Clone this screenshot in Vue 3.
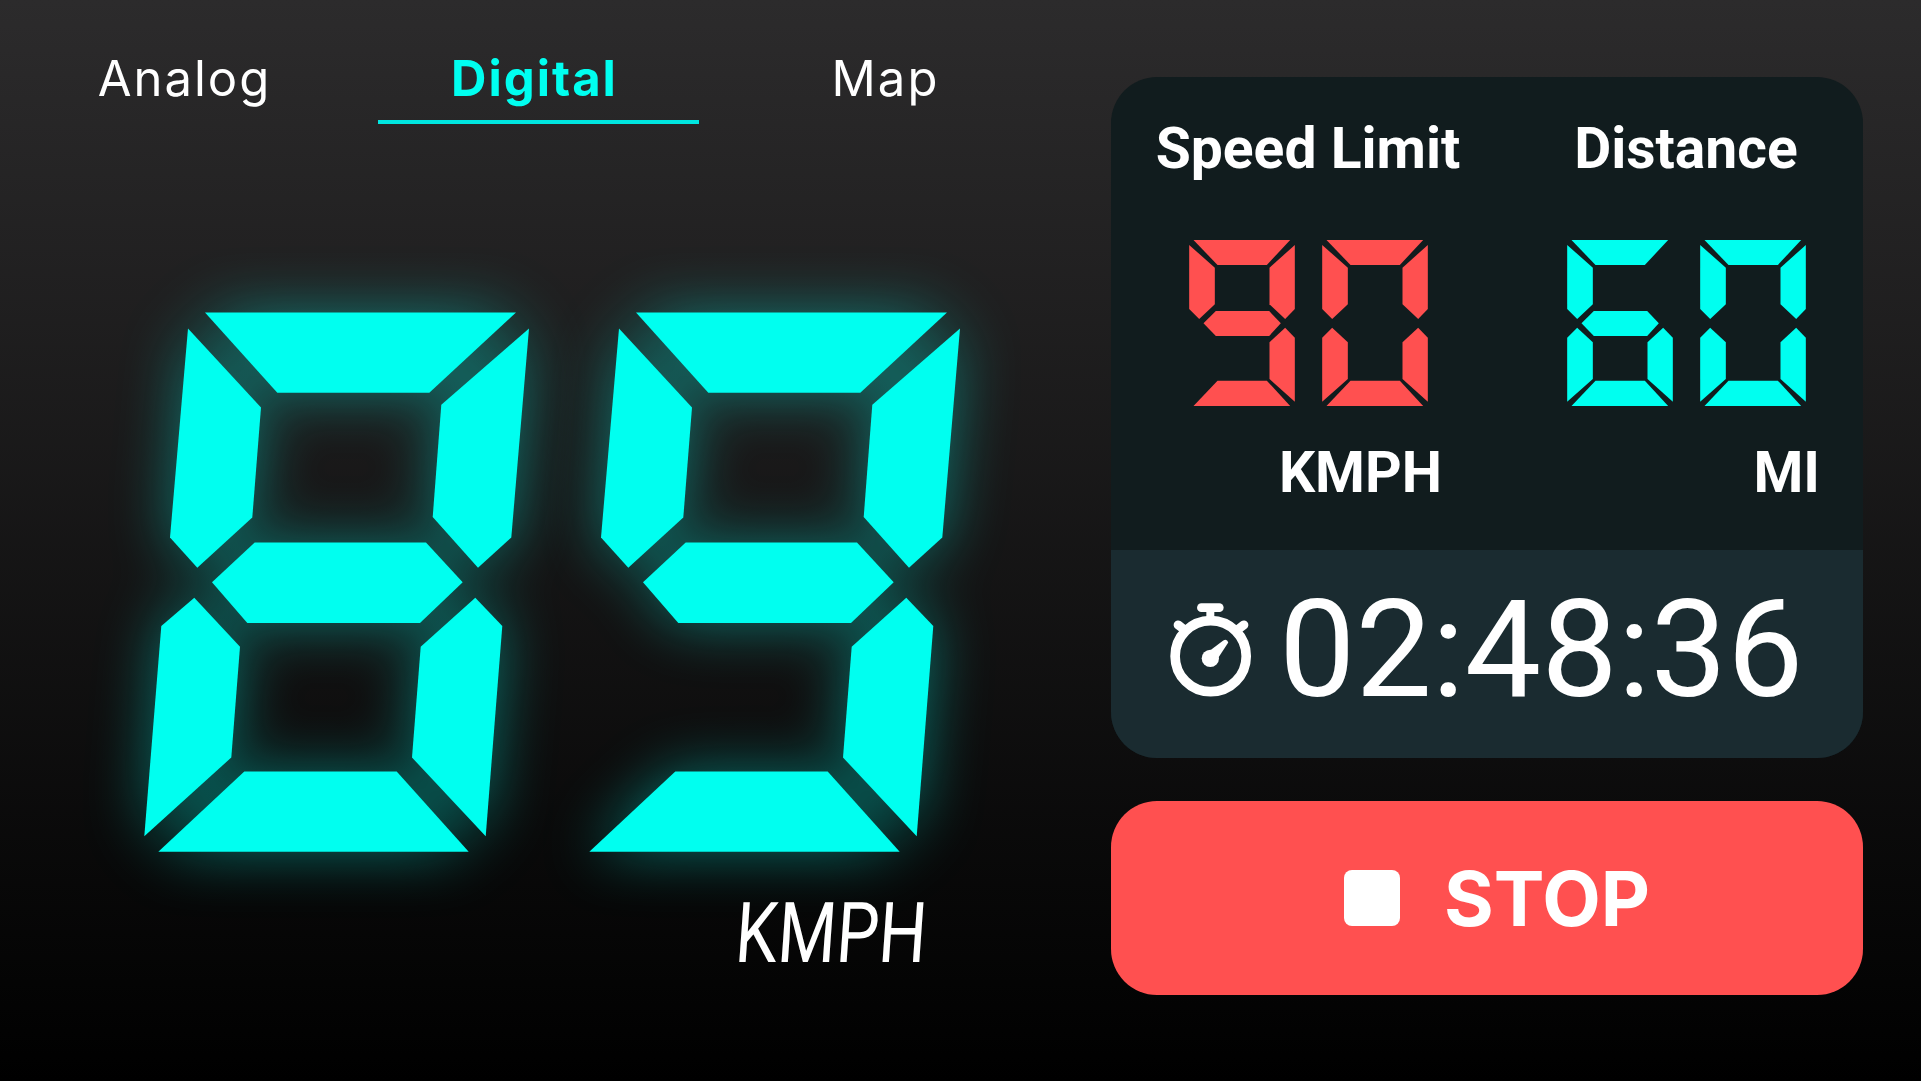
<script setup>
import { ref } from "vue";

const tabs = ["Analog", "Digital", "Map"];
const activeTab = ref("Digital");

// which lamps of a seven segment display are lit for each digit
const lit = {
  0: "abcdef", 1: "bc", 2: "abdeg", 3: "abcdg", 4: "bcfg",
  5: "acdfg", 6: "acdefg", 7: "abc", 8: "abcdefg", 9: "abcdfg",
};

const bigLamps = {
  a: "205,312.6 516,312.6 429.3,392.7 277.3,392.7",
  b: "529,328.4 511.3,537.6 478,567.7 432.7,516.9 441.3,404.7",
  c: "475.3,597.7 502.3,626 485.7,836.3 412,757.6 420.7,646.7",
  d: "244.3,771.6 396.7,771.6 468.7,851.7 158.3,851.7",
  e: "194.3,597.7 240,646.7 231.3,757.6 144.3,836.3 161.3,626",
  f: "188,328.4 261,407.4 252.3,517.6 197.3,567.7 170,537.6",
  g: "254.7,542.4 426,542.4 462.7,582.3 420,622.9 247.3,622.9 212,582.3",
};

const smallLamps = {
  a: "68,45 358,45 288,120 140,120",
  b: "372,60 372,252 343,282 296,238 296,128",
  c: "343,308 372,338 372,530 296,462 296,352",
  d: "140,467 288,467 358,543 68,543",
  e: "85,308 132,352 132,462 55,530 55,338",
  f: "55,60 132,128 132,238 85,282 55,252",
  g: "135,258 295,258 330,295 295,333 135,333 98,295",
};

const lamps = (digit, shape) => [...lit[digit]].map((name) => shape[name]);

const speed = ["8", "9"];
const stats = [
  { title: "Speed Limit", digits: ["9", "0"], unit: "KMPH", tone: "red" },
  { title: "Distance", digits: ["6", "0"], unit: "MI", tone: "cyan" },
];
</script>

<template>
  <div class="page">
    <section class="left">
      <nav class="tabs">
        <button
          v-for="tab in tabs"
          :key="tab"
          class="tab"
          :class="{ active: tab === activeTab }"
          @click="activeTab = tab"
        >
          {{ tab }}
        </button>
      </nav>

      <div class="speed" role="img" aria-label="89 KMPH">
        <svg
          v-for="(digit, i) in speed"
          :key="i"
          class="big-digit"
          viewBox="144 312 386 540"
        >
          <polygon v-for="p in lamps(digit, bigLamps)" :key="p" :points="p" />
        </svg>
      </div>
      <div class="speed-unit">KMPH</div>
    </section>

    <section class="right">
      <div class="panel">
        <div class="stats">
          <div v-for="stat in stats" :key="stat.title" class="stat">
            <div class="stat-title">{{ stat.title }}</div>
            <div class="stat-digits" :class="stat.tone" role="img" :aria-label="stat.digits.join('')">
              <svg
                v-for="(digit, i) in stat.digits"
                :key="i"
                class="small-digit"
                viewBox="55 45 317 498"
              >
                <polygon v-for="p in lamps(digit, smallLamps)" :key="p" :points="p" />
              </svg>
            </div>
            <div class="stat-unit">{{ stat.unit }}</div>
          </div>
        </div>
        <div class="timer">
          <svg class="watch" viewBox="55 65 255 295">
            <circle cx="183" cy="231" r="107" fill="none" stroke="#fff" stroke-width="29" />
            <rect x="142" y="72" width="80" height="26" rx="13" fill="#fff" />
            <rect x="170" y="95" width="24" height="35" fill="#fff" />
            <path d="M85 137 L106 153 M283 137 L262 153" stroke="#fff" stroke-width="27" stroke-linecap="round" />
            <circle cx="182" cy="238" r="26" fill="#fff" />
            <path d="M170 222 L221 184 Q232 178 236 190 L198 248 Z" fill="#fff" />
          </svg>
          <span class="time">02:48:36</span>
        </div>
      </div>

      <button class="stop">
        <span class="stop-icon"></span>
        <span>STOP</span>
      </button>
    </section>
  </div>
</template>

<style>
html, body {
  margin: 0;
  background: #000;
}
</style>

<style scoped>
.page {
  width: 1921px;
  height: 1081px;
  overflow: hidden;
  display: flex;
  background: linear-gradient(180deg, #2c2b2c 0%, #000 100%);
  color: #fff;
  font-family: Roboto, "Liberation Sans", sans-serif;
}

.left {
  width: 1111px;
  display: flex;
  flex-direction: column;
  box-sizing: border-box;
  padding-left: 24px;
}

.tabs {
  display: grid;
  grid-template-columns: 321px 321px 307px;
  gap: 33px;
  margin-top: 46px;
}

.tab {
  height: 78px;
  padding: 0 0 10px;
  border: none;
  border-bottom: 4px solid transparent;
  background: none;
  color: #fff;
  font-family: Inter, "Liberation Sans", sans-serif;
  font-size: 49px;
  font-weight: 400;
  letter-spacing: 2px;
  cursor: pointer;
}

.tab.active {
  padding-right: 8px;
  border-bottom-color: #00e6e0;
  color: #00fff0;
  font-weight: 700;
}

.speed {
  display: flex;
  gap: 45px;
  margin: 188px 0 0 120px;
}

.big-digit {
  width: 386px;
  height: 540px;
  overflow: visible;
  fill: #00fff0;
  filter: drop-shadow(0 0 30px rgba(0, 255, 240, 0.4));
}

.speed-unit {
  align-self: flex-end;
  margin: 38px 184px 0 0;
  font-size: 84px;
  font-weight: 400;
  line-height: 88px;
  white-space: nowrap;
  transform: skewX(-4deg) scaleX(0.8);
  transform-origin: right center;
}

.right {
  width: 752px;
  margin-top: 77px;
  display: flex;
  flex-direction: column;
  gap: 43px;
}

.panel {
  height: 681px;
  border-radius: 46px;
  overflow: hidden;
  display: flex;
  flex-direction: column;
  background: #111c1e;
}

.stats {
  height: 473px;
  box-sizing: border-box;
  padding: 37px 45px 0 65px;
  display: flex;
  justify-content: space-between;
}

.stat {
  width: 264px;
  display: flex;
  flex-direction: column;
  align-items: center;
}

.stat-title {
  font-size: 57px;
  font-weight: 700;
  line-height: 70px;
  white-space: nowrap;
}

.stat-digits {
  display: flex;
  gap: 27px;
  margin-top: 56px;
}

.stat-digits.red {
  fill: #ff5050;
}

.stat-digits.cyan {
  fill: #00fff0;
}

.small-digit {
  width: 106px;
  height: 166px;
}

.stat-unit {
  align-self: flex-end;
  margin: 32px -2px 0 0;
  font-size: 57px;
  font-weight: 700;
  line-height: 70px;
}

.timer {
  flex: 1;
  display: flex;
  align-items: center;
  gap: 26px;
  padding: 0 0 8px 57px;
  background: #1a2b30;
}

.watch {
  width: 85px;
  height: 98px;
  flex: none;
}

.time {
  font-size: 136px;
  font-weight: 400;
  line-height: 1;
  white-space: nowrap;
}

.stop {
  height: 194px;
  border: none;
  border-radius: 46px;
  display: flex;
  align-items: center;
  justify-content: center;
  gap: 44px;
  padding: 0 0 0 20px;
  background: #ff5050;
  color: #fff;
  font-family: Inter, "Liberation Sans", sans-serif;
  font-size: 76px;
  font-weight: 700;
  cursor: pointer;
}

.stop-icon {
  width: 56px;
  height: 56px;
  border-radius: 8px;
  background: #fff;
}
</style>
